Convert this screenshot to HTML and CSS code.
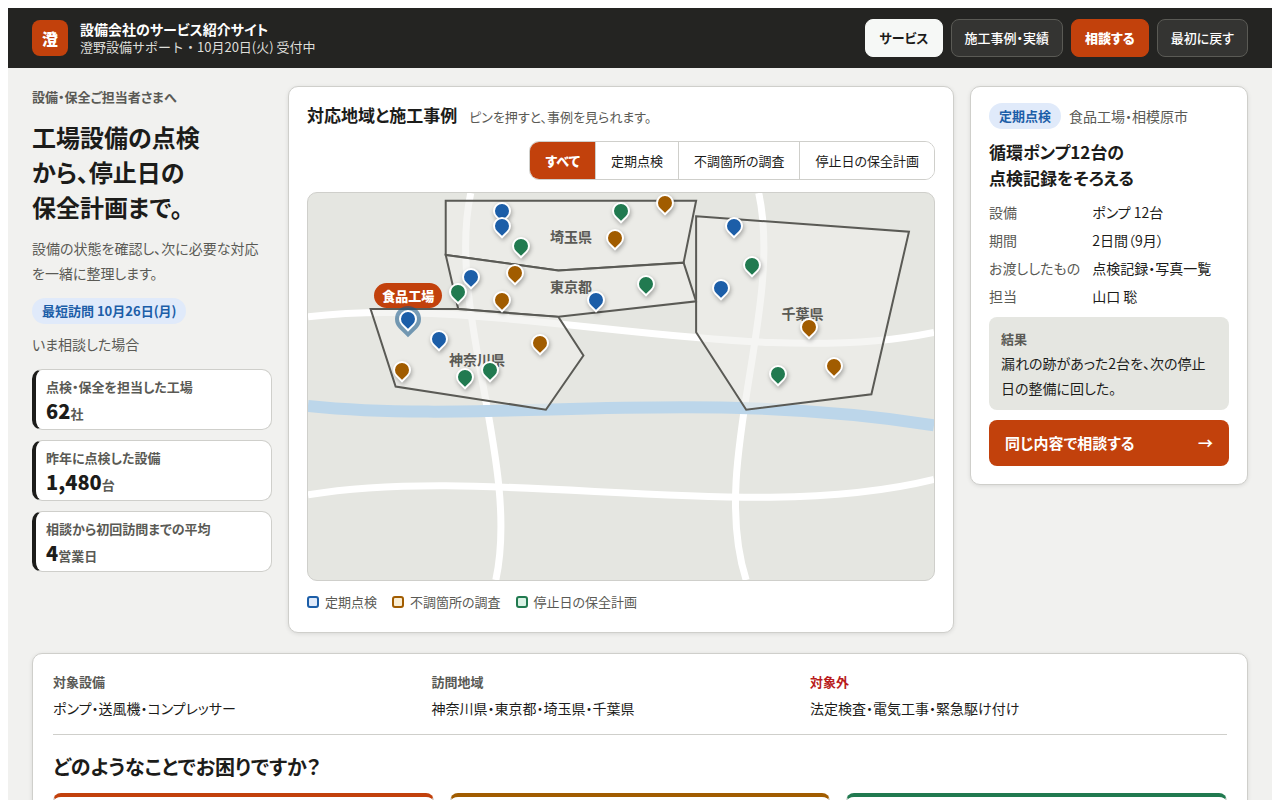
FILE: index.html
```html
<!DOCTYPE html>
<html lang="ja">
<head>
<meta charset="utf-8">
<meta name="viewport" content="width=device-width, initial-scale=1">
<title>澄野設備サポート</title>
<link rel="stylesheet" href="styles.css">
</head>
<body>
<svg width="0" height="0" class="defs" aria-hidden="true">
  <symbol id="pin" viewBox="0 0 18 22"><path d="M9 20.3 3.34 14.66A8 8 0 1 1 14.66 14.66Z"/></symbol>
</svg>
<div class="page">
  <header class="topbar">
    <div class="brand">
      <span class="logo">澄</span>
      <div class="brand-text">
        <strong>設備会社のサービス紹介サイト</strong>
        <span>澄野設備サポート・10月20日(火) 受付中</span>
      </div>
    </div>
    <nav class="nav">
      <button type="button" class="nav-btn current">サービス</button>
      <button type="button" class="nav-btn">施工事例・実績</button>
      <button type="button" class="nav-btn primary">相談する</button>
      <button type="button" class="nav-btn">最初に戻す</button>
    </nav>
  </header>

  <main class="content">
    <div class="columns">
      <section class="intro">
        <p class="eyebrow">設備・保全ご担当者さまへ</p>
        <h1>工場設備の点検<br>から、停止日の<br>保全計画まで。</h1>
        <p class="lead">設備の状態を確認し、次に必要な対応を一緒に整理します。</p>
        <div class="visit">
          <span class="tag">最短訪問 10月26日(月)</span>
          <span class="visit-note">いま相談した場合</span>
        </div>
        <div class="stats">
          <div class="stat"><span class="stat-label">点検・保全を担当した工場</span><span class="stat-value"><b>62</b>社</span></div>
          <div class="stat"><span class="stat-label">昨年に点検した設備</span><span class="stat-value"><b>1,480</b>台</span></div>
          <div class="stat"><span class="stat-label">相談から初回訪問までの平均</span><span class="stat-value"><b>4</b>営業日</span></div>
        </div>
      </section>

      <section class="card map-card">
        <div class="map-head">
          <h2>対応地域と施工事例</h2>
          <p>ピンを押すと、事例を見られます。</p>
        </div>
        <div class="segmented">
          <button type="button" class="selected">すべて</button>
          <button type="button">定期点検</button>
          <button type="button">不調箇所の調査</button>
          <button type="button">停止日の保全計画</button>
        </div>
        <div class="map">
          <svg class="map-art" viewBox="0 0 100 100" preserveAspectRatio="none" aria-hidden="true">
            <g class="road">
              <path d="M0 32C30 26 70 46 100 36"/>
              <path d="M0 78C30 70 70 86 100 74"/>
              <path d="M26 0C22 30 34 70 30 100"/>
              <path d="M72 0C76 30 64 70 70 100"/>
            </g>
            <path class="river" d="M0 55C30 60 60 50 100 60"/>
            <g class="area">
              <path d="M22 2H62L60 18 40 20 22 16Z"/>
              <path d="M22 16 40 20 60 18 62 28 40 32 24 30Z"/>
              <path d="M10 30H24L40 32 44 42 38 56 14 50Z"/>
              <path d="M62 6 96 10 90 52 70 56 62 36Z"/>
            </g>
          </svg>
          <span class="area-name" style="left:42%;top:11%">埼玉県</span>
          <span class="area-name" style="left:42%;top:24%">東京都</span>
          <span class="area-name" style="left:27%;top:43%">神奈川県</span>
          <span class="area-name" style="left:79%;top:31%">千葉県</span>
          <button type="button" class="pin brown" style="left:57%;top:6%" aria-label="事例"><svg><use href="#pin"/></svg></button>
          <button type="button" class="pin blue" style="left:31%;top:8%" aria-label="事例"><svg><use href="#pin"/></svg></button>
          <button type="button" class="pin green" style="left:50%;top:8%" aria-label="事例"><svg><use href="#pin"/></svg></button>
          <button type="button" class="pin blue" style="left:31%;top:12%" aria-label="事例"><svg><use href="#pin"/></svg></button>
          <button type="button" class="pin blue" style="left:68%;top:12%" aria-label="事例"><svg><use href="#pin"/></svg></button>
          <button type="button" class="pin brown" style="left:49%;top:15%" aria-label="事例"><svg><use href="#pin"/></svg></button>
          <button type="button" class="pin green" style="left:34%;top:17%" aria-label="事例"><svg><use href="#pin"/></svg></button>
          <button type="button" class="pin green" style="left:71%;top:22%" aria-label="事例"><svg><use href="#pin"/></svg></button>
          <button type="button" class="pin brown" style="left:33%;top:24%" aria-label="事例"><svg><use href="#pin"/></svg></button>
          <button type="button" class="pin blue" style="left:26%;top:25%" aria-label="事例"><svg><use href="#pin"/></svg></button>
          <button type="button" class="pin green" style="left:54%;top:27%" aria-label="事例"><svg><use href="#pin"/></svg></button>
          <button type="button" class="pin blue" style="left:66%;top:28%" aria-label="事例"><svg><use href="#pin"/></svg></button>
          <button type="button" class="pin green" style="left:24%;top:29%" aria-label="事例"><svg><use href="#pin"/></svg></button>
          <button type="button" class="pin brown" style="left:31%;top:31%" aria-label="事例"><svg><use href="#pin"/></svg></button>
          <button type="button" class="pin blue" style="left:46%;top:31%" aria-label="事例"><svg><use href="#pin"/></svg></button>
          <button type="button" class="pin brown" style="left:80%;top:38%" aria-label="事例"><svg><use href="#pin"/></svg></button>
          <button type="button" class="pin blue" style="left:21%;top:41%" aria-label="事例"><svg><use href="#pin"/></svg></button>
          <button type="button" class="pin brown" style="left:37%;top:42%" aria-label="事例"><svg><use href="#pin"/></svg></button>
          <button type="button" class="pin brown" style="left:84%;top:48%" aria-label="事例"><svg><use href="#pin"/></svg></button>
          <button type="button" class="pin brown" style="left:15%;top:49%" aria-label="事例"><svg><use href="#pin"/></svg></button>
          <button type="button" class="pin green" style="left:29%;top:49%" aria-label="事例"><svg><use href="#pin"/></svg></button>
          <button type="button" class="pin green" style="left:75%;top:50%" aria-label="事例"><svg><use href="#pin"/></svg></button>
          <button type="button" class="pin green" style="left:25%;top:51%" aria-label="事例"><svg><use href="#pin"/></svg></button>
          <button type="button" class="pin blue active" style="left:16%;top:36%"><svg><use class="halo" href="#pin"/><use href="#pin"/></svg><span class="pin-label">食品工場</span></button>
        </div>
        <ul class="legend">
          <li><i class="swatch blue"></i>定期点検</li>
          <li><i class="swatch brown"></i>不調箇所の調査</li>
          <li><i class="swatch green"></i>停止日の保全計画</li>
        </ul>
      </section>

      <aside class="card case">
        <div class="case-head"><span class="tag">定期点検</span><span>食品工場・相模原市</span></div>
        <h3>循環ポンプ12台の<br>点検記録をそろえる</h3>
        <dl class="facts">
          <dt>設備</dt><dd>ポンプ 12台</dd>
          <dt>期間</dt><dd>2日間（9月）</dd>
          <dt>お渡ししたもの</dt><dd>点検記録・写真一覧</dd>
          <dt>担当</dt><dd>山口 聡</dd>
        </dl>
        <div class="result">
          <strong>結果</strong>
          <p>漏れの跡があった2台を、次の停止日の整備に回した。</p>
        </div>
        <button type="button" class="cta"><span>同じ内容で相談する</span><span>→</span></button>
      </aside>
    </div>

    <section class="card services">
      <div class="scope">
        <div><h4>対象設備</h4><p>ポンプ・送風機・コンプレッサー</p></div>
        <div><h4>訪問地域</h4><p>神奈川県・東京都・埼玉県・千葉県</p></div>
        <div><h4 class="out">対象外</h4><p>法定検査・電気工事・緊急駆け付け</p></div>
      </div>
      <h2>どのようなことでお困りですか？</h2>
      <div class="needs">
        <div class="need orange"></div>
        <div class="need brown"></div>
        <div class="need green"></div>
      </div>
    </section>
  </main>
</div>
</body>
</html>
```
FILE: styles.css
```css
:root {
  --ink: #1c1c1a;
  --muted: #5a5a55;
  --line: #cfcfcb;
  --surface: #e5e6e1;
  --orange: #c2410c;
  --blue: #1c5ea8;
  --brown: #a15c00;
  --green: #217a50;
}

*, *::before, *::after { box-sizing: border-box; }

body {
  background: #fff;
  color: var(--ink);
  font-family: "Noto Sans CJK JP", sans-serif;
  font-size: 14px;
  line-height: 22px;
  font-feature-settings: "palt";
}

h1, h2, h3, h4, p, ul, dl, dd { margin: 0; padding: 0; }
button { font: inherit; font-feature-settings: inherit; color: inherit; cursor: pointer; }
.defs { position: absolute; }

.page { background: #f1f1ef; }

.topbar {
  display: flex;
  justify-content: space-between;
  align-items: center;
  padding: 11px 24px;
  background: #242422;
  color: #fff;
}
.brand { display: flex; align-items: center; gap: 12px; }
.logo {
  display: grid;
  place-items: center;
  width: 36px;
  height: 36px;
  border-radius: 8px;
  background: var(--orange);
  font-size: 16px;
  font-weight: 900;
}
.brand-text { display: grid; font-size: 14px; line-height: 18px; }
.brand-text span { color: #deded9; font-feature-settings: normal; font-size: 13px; }
.nav { display: flex; gap: 8px; }
.nav-btn {
  height: 38px;
  padding: 0 13px;
  border: 1px solid #5a5a55;
  border-radius: 8px;
  background: #343432;
  font-size: 13px;
  font-weight: 500;
}
.nav-btn.current { background: #f6f8f6; border-color: #f6f8f6; color: var(--ink); font-weight: 700; }
.nav-btn.primary { background: var(--orange); border-color: var(--orange); font-weight: 900; }

.content { padding: 18px 24px 24px; }
.columns {
  display: grid;
  grid-template-columns: 240px minmax(0, 1fr) 278px;
  gap: 16px;
  align-items: start;
}

.card {
  background: #fff;
  border: 1px solid var(--line);
  border-radius: 10px;
  box-shadow: 0 1px 4px rgba(0, 0, 0, .1);
}
.tag {
  padding: 0 10px;
  border-radius: 13px;
  background: #e0eafa;
  color: var(--blue);
  font-size: 13px;
  font-weight: 700;
  line-height: 26px;
}

.intro { display: grid; gap: 12px; }
.eyebrow { color: var(--muted); font-size: 13px; font-weight: 700; line-height: 21px; }
h1 { font-size: 24px; line-height: 35px; }
.lead { padding-right: 8px; color: var(--muted); line-height: 25px; }
.visit { display: grid; justify-items: start; gap: 8px; color: var(--muted); line-height: 25px; }
.stats { display: grid; gap: 10px; }
.stat {
  display: grid;
  padding: 6px 10px 3px;
  border: 1px solid var(--line);
  border-left: 4px solid var(--ink);
  border-radius: 10px;
  background: #fff;
  color: var(--muted);
  font-size: 13px;
  font-weight: 700;
}
.stat-label { line-height: 22px; }
.stat-value { line-height: 25px; }
.stat-value b { color: var(--ink); font-size: 20px; }

.map-card { display: grid; gap: 12px; padding: 16px 18px 21px; }
.map-head { display: flex; align-items: baseline; gap: 12px; line-height: 24px; }
.map-head h2 { font-size: 17px; }
.map-head p { color: var(--muted); font-size: 13px; }
.segmented {
  display: flex;
  justify-self: end;
  border: 1px solid var(--line);
  border-radius: 10px;
  overflow: hidden;
}
.segmented button {
  height: 37px;
  padding: 0 15px;
  border: 0;
  background: #fff;
  font-size: 13px;
}
.segmented button + button { border-left: 1px solid var(--line); }
.segmented .selected { background: var(--orange); color: #fff; font-weight: 900; }

.map {
  position: relative;
  aspect-ratio: 628 / 389;
  border: 1px solid var(--line);
  border-radius: 10px;
  background: var(--surface);
  overflow: hidden;
}
.map-art { display: block; width: 100%; height: 100%; }
.map-art path { fill: none; vector-effect: non-scaling-stroke; }
.map-art .road path { stroke: #fff; stroke-width: 7px; }
.map-art .river { stroke: #bcd6ea; stroke-width: 12px; }
.map-art .area path { fill: rgba(238, 239, 235, .6); stroke: var(--muted); stroke-width: 2px; }
.area-name {
  position: absolute;
  transform: translate(-50%, -50%);
  color: var(--muted);
  font-size: 14px;
  font-weight: 700;
  white-space: nowrap;
}

.blue { --kind: var(--blue); --tint: #e0eafa; }
.brown { --kind: var(--brown); --tint: #fbeed3; }
.green { --kind: var(--green); --tint: #d9f2e5; }
.orange { --kind: var(--orange); }

.pin {
  position: absolute;
  width: 18px;
  height: 22px;
  padding: 0;
  border: 0;
  background: none;
  transform: translate(-50%, -100%);
}
.pin svg {
  display: block;
  position: relative;
  z-index: 1;
  width: 18px;
  height: 22px;
  overflow: visible;
  fill: var(--kind);
  stroke: #fff;
  stroke-width: 2px;
  filter: drop-shadow(1px 2px 2px rgba(0, 0, 0, .3));
}
.pin.active svg { filter: none; }
#pin { overflow: visible; }
.pin .halo { fill: none; stroke: rgba(20, 86, 135, .56); stroke-width: 10px; }
.pin-label {
  position: absolute;
  left: 50%;
  bottom: 24px;
  transform: translateX(-50%);
  padding: 0 8px;
  border-radius: 13px;
  background: var(--orange);
  color: #fff;
  font-size: 13px;
  font-weight: 900;
  line-height: 25px;
  white-space: nowrap;
}

.legend { display: flex; gap: 15px; list-style: none; color: var(--muted); font-size: 13px; line-height: 18px; }
.legend li { display: flex; align-items: center; gap: 6px; }
.swatch {
  width: 12px;
  height: 12px;
  border: 2px solid var(--kind);
  border-radius: 3px;
  background: var(--tint);
}

.case { display: grid; gap: 10px; padding: 16px 18px 18px; }
.case-head { display: flex; align-items: center; gap: 8px; color: var(--muted); }
h3 { font-size: 17px; line-height: 26px; }
.facts { display: grid; grid-template-columns: auto 1fr; gap: 6px 12px; }
.facts dt { color: var(--muted); }
.result { padding: 9px 12px; border-radius: 8px; background: var(--surface); line-height: 25px; }
.result strong { color: var(--muted); font-size: 13px; }
.cta {
  display: flex;
  justify-content: space-between;
  align-items: center;
  height: 46px;
  padding: 0 16px;
  border: 0;
  border-radius: 8px;
  background: var(--orange);
  color: #fff;
  font-size: 15px;
  font-weight: 700;
}

.services { margin-top: 20px; padding: 17px 20px 20px; }
.scope {
  display: grid;
  grid-template-columns: 20fr 20fr 23fr;
  gap: 16px;
  padding-bottom: 15px;
  border-bottom: 1px solid var(--line);
}
.scope h4 { color: var(--muted); font-size: 13px; }
.scope .out { color: #b91c1c; }
.scope p { margin-top: 4px; }
.services h2 { margin: 16px 0 10px; font-size: 20px; line-height: 32px; }
.needs { display: grid; grid-template-columns: repeat(3, 1fr); gap: 16px; }
.need {
  min-height: 160px;
  border: 1px solid var(--line);
  border-top: 4px solid var(--kind);
  border-radius: 8px;
}
```
